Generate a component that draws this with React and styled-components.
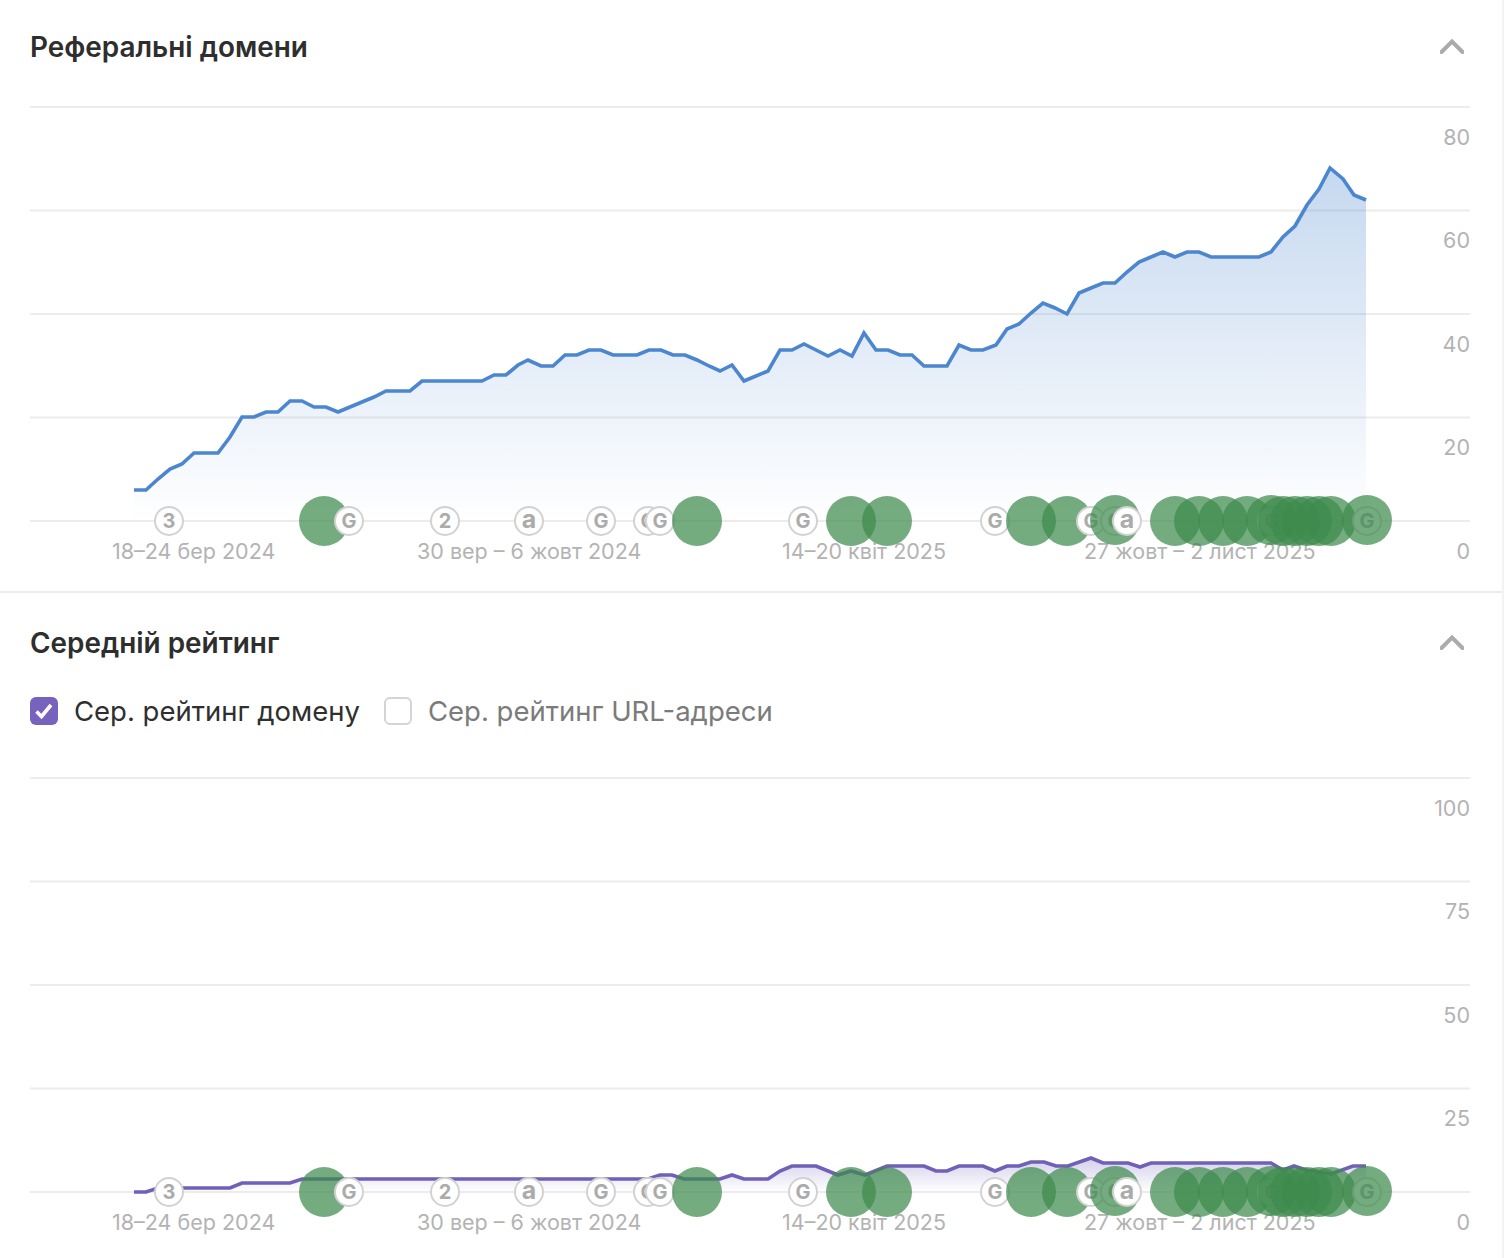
import React from "react";
import styled, { createGlobalStyle } from "styled-components";

const Global = createGlobalStyle`
  html, body { margin: 0; padding: 0; background: #fff; }
  body { font-family: Inter, "Noto Sans", sans-serif; overflow: hidden; }
`;

const Page = styled.main`
  width: 1504px;
  height: 1258px;
  box-sizing: border-box;
  border-right: 2px solid #f3f3f3;
  overflow: hidden;
`;

const Section = styled.section`
  padding: ${(p) => p.$top}px 32px 0 30px;
  border-bottom: ${(p) => (p.$divider ? "2px solid #ececec" : "none")};
`;

const Header = styled.header`
  display: flex;
  align-items: center;
  justify-content: space-between;
  height: 34px;
`;

const Title = styled.h2`
  margin: 0;
  font-size: 27.9px;
  line-height: 34px;
  font-weight: 600;
  color: #2e2e2e;
`;

const Toggle = styled.button`
  display: flex;
  width: 24px;
  height: 16px;
  margin-right: 6px;
  padding: 0;
  border: 0;
  background: none;
`;

const Legend = styled.div`
  display: flex;
  align-items: center;
  height: 28px;
  margin-top: 37px;
`;

const LegendItem = styled.label`
  display: flex;
  align-items: center;
  gap: 16px;
  margin-right: 26px;
  font-size: 27.5px;
  line-height: 28px;
  font-weight: 400;
  color: ${(p) => (p.$on ? "#2f2f2f" : "#7b7b7b")};
`;

const Box = styled.span`
  display: flex;
  align-items: center;
  justify-content: center;
  box-sizing: border-box;
  width: 28px;
  height: 28px;
  margin-left: ${(p) => (p.$on ? 0 : -2)}px;
  border-radius: 6px;
  background: ${(p) => (p.$on ? "#7763bd" : "#fff")};
  border: ${(p) => (p.$on ? "none" : "2px solid #d4d4d4")};
`;

const Plot = styled.svg`
  display: block;
  width: 1440px;
  height: ${(p) => p.$h}px;
  margin-top: ${(p) => p.$gap}px;
  overflow: visible;
`;

const AxisText = styled.text`
  font-family: Inter, "Noto Sans", sans-serif;
  font-size: 21.5px;
  fill: #b3b3b3;
`;

const BadgeText = styled.text`
  font-family: Inter, "Noto Sans", sans-serif;
  font-size: ${(p) => p.$size}px;
  font-weight: 700;
  fill: #ababab;
  text-anchor: middle;
`;

const bluePts = [
  [134,490],[146,490],[158,479],[170,469],[182,464],[194,453],[218,453],[230,437],[242,417],[254,417],[266,412],[278,412],
  [290,401],[302,401],[314,407],[326,407],[338,412],[350,407],[362,402],[374,397],[386,391],[410,391],[422,381],[482,381],
  [494,375],[506,375],[518,365],[528,360],[541,366],[553,366],[565,355],[577,355],[589,350],[601,350],[613,355],[637,355],
  [649,350],[661,350],[673,355],[685,355],[697,360],[709,366],[720,371],[732,365],[744,381],[756,376],[768,371],[780,350],
  [792,350],[804,344],[816,350],[828,356],[840,350],[852,356],[864,333],[876,350],[888,350],[900,355],[912,355],[924,366],
  [947,366],[959,345],[971,350],[983,350],[996,345],[1007,329],[1019,324],[1031,313],[1043,303],[1055,308],[1067,314],
  [1079,293],[1091,288],[1103,283],[1115,283],[1127,272],[1139,262],[1151,257],[1163,252],[1175,257],[1187,252],[1199,252],
  [1211,257],[1259,257],[1271,252],[1283,237],[1295,226],[1307,205],[1319,189],[1330,168],[1343,179],[1354,195],[1366,200],
];

const purplePts = [
  [134,1192],[146,1192],[158,1188],[230,1188],[242,1183],[290,1183],[302,1179],[648,1179],[660,1175],[672,1175],[684,1179],
  [720,1179],[732,1175],[744,1179],[768,1179],[780,1171],[792,1166],[816,1166],[838,1175],[851,1171],[865,1175],[887,1166],
  [924,1166],[936,1171],[947,1171],[959,1166],[983,1166],[995,1171],[1007,1166],[1019,1166],[1031,1162],[1044,1162],
  [1056,1166],[1068,1166],[1091,1158],[1103,1163],[1128,1163],[1140,1167],[1151,1163],[1271,1163],[1283,1170],[1294,1166],
  [1306,1170],[1331,1174],[1353,1166],[1366,1166],
];

const toPath = (pts) => pts.map(([x, y], i) => `${i ? "L" : "M"}${x} ${y}`).join(" ");

// Events in drawing order: b = marker badge with a glyph, d = green dot
const events = [
  ["b", 169, "3"], ["d", 324], ["b", 349, "G"], ["b", 445, "2"], ["b", 529, "a"], ["b", 601, "G"], ["b", 648, "G"], ["b", 660, "G"],
  ["d", 697], ["b", 803, "G"], ["d", 851], ["d", 887], ["b", 995, "G"], ["d", 1031], ["d", 1067], ["b", 1091, "G"],
  ["b", 1115, "G"], ["d", 1115, null, -1], ["b", 1127, "a"], ["d", 1175], ["d", 1199], ["d", 1223], ["d", 1247],
  ["b", 1272, "G"], ["d", 1271, null, -1], ["d", 1283], ["d", 1295], ["d", 1307], ["d", 1319], ["d", 1331],
  ["b", 1367, "G"], ["d", 1367, null, -1],
];

const xLabels = [
  [112, "18–24 бер 2024"],
  [417, "30 вер – 6 жовт 2024"],
  [782, "14–20 квіт 2025"],
  [1084, "27 жовт – 2 лист 2025"],
];

function Chart({ id, pts, color, stopTop, gradTop, gridTop, ticks, height, gap, originY }) {
  const base = gridTop + 414;
  const line = toPath(pts);
  const area = `${line} L${pts[pts.length - 1][0]} ${base} L${pts[0][0]} ${base} Z`;
  return (
    <Plot $h={height} $gap={gap} viewBox={`30 ${originY} 1440 ${height}`}>
      <defs>
        <linearGradient id={id} gradientUnits="userSpaceOnUse" x1="0" x2="0" y1={gradTop} y2={base}>
          <stop offset="0" stopColor={color} stopOpacity={stopTop} />
          <stop offset="1" stopColor={color} stopOpacity="0" />
        </linearGradient>
      </defs>
      {[0, 1, 2, 3, 4].map((i) => (
        <line key={i} x1="30" x2="1470" y1={gridTop + i * 103.5} y2={gridTop + i * 103.5} stroke="#ececec" strokeWidth="2" />
      ))}
      {ticks.map((t, i) => (
        <AxisText key={t} x="1470" y={gridTop + 37.6 + i * 103.5} textAnchor="end">{t}</AxisText>
      ))}
      {xLabels.map(([x, t]) => (
        <AxisText key={t} x={x} y={base + 38}>{t}</AxisText>
      ))}
      <path d={area} fill={`url(#${id})`} />
      <path d={line} fill="none" stroke={color} strokeWidth="3.6" strokeLinejoin="miter" />
      {events.map(([kind, x, glyph, dy = 0], i) =>
        kind === "d" ? (
          <circle key={i} cx={x} cy={base + dy} r="25" fill="#3f8a4e" fillOpacity="0.72" />
        ) : (
          <g key={i}>
            <circle cx={x} cy={base} r="14" fill="#fff" stroke="#d2d2d2" strokeWidth="2" />
            <BadgeText x={x} y={base + 7} $size={glyph === "a" ? 25 : 20}>{glyph}</BadgeText>
          </g>
        )
      )}
    </Plot>
  );
}

function Collapse() {
  return (
    <Toggle aria-label="Згорнути">
      <svg width="24" height="16" viewBox="0 0 24 16">
        <path d="M1.5 13 L12 2.5 L22.5 13" fill="none" stroke="#ababab" strokeWidth="4" strokeLinecap="round" />
      </svg>
    </Toggle>
  );
}

export default function App() {
  return (
    <Page>
      <Global />
      <Section $top={30} $divider>
        <Header>
          <Title>Реферальні домени</Title>
          <Collapse />
        </Header>
        <Chart
          id="blueFill"
          pts={bluePts}
          color="#4b86cf"
          stopTop={0.32}
          gradTop={168}
          gridTop={107}
          ticks={["80", "60", "40", "20", "0"]}
          height={491}
          gap={36}
          originY={100}
        />
      </Section>
      <Section $top={33}>
        <Header>
          <Title>Середній рейтинг</Title>
          <Collapse />
        </Header>
        <Legend>
          <LegendItem $on>
            <Box $on>
              <svg width="20" height="18" viewBox="0 0 20 18">
                <path d="M2.5 9.5 L7.5 14.5 L17 3" fill="none" stroke="#fff" strokeWidth="3.6" />
              </svg>
            </Box>
            Сер. рейтинг домену
          </LegendItem>
          <LegendItem>
            <Box />
            Сер. рейтинг URL-адреси
          </LegendItem>
        </Legend>
        <Chart
          id="purpleFill"
          pts={purplePts}
          color="#7060b8"
          stopTop={0.3}
          gradTop={1158}
          gridTop={778}
          ticks={["100", "75", "50", "25", "0"]}
          height={487}
          gap={46}
          originY={771}
        />
      </Section>
    </Page>
  );
}
